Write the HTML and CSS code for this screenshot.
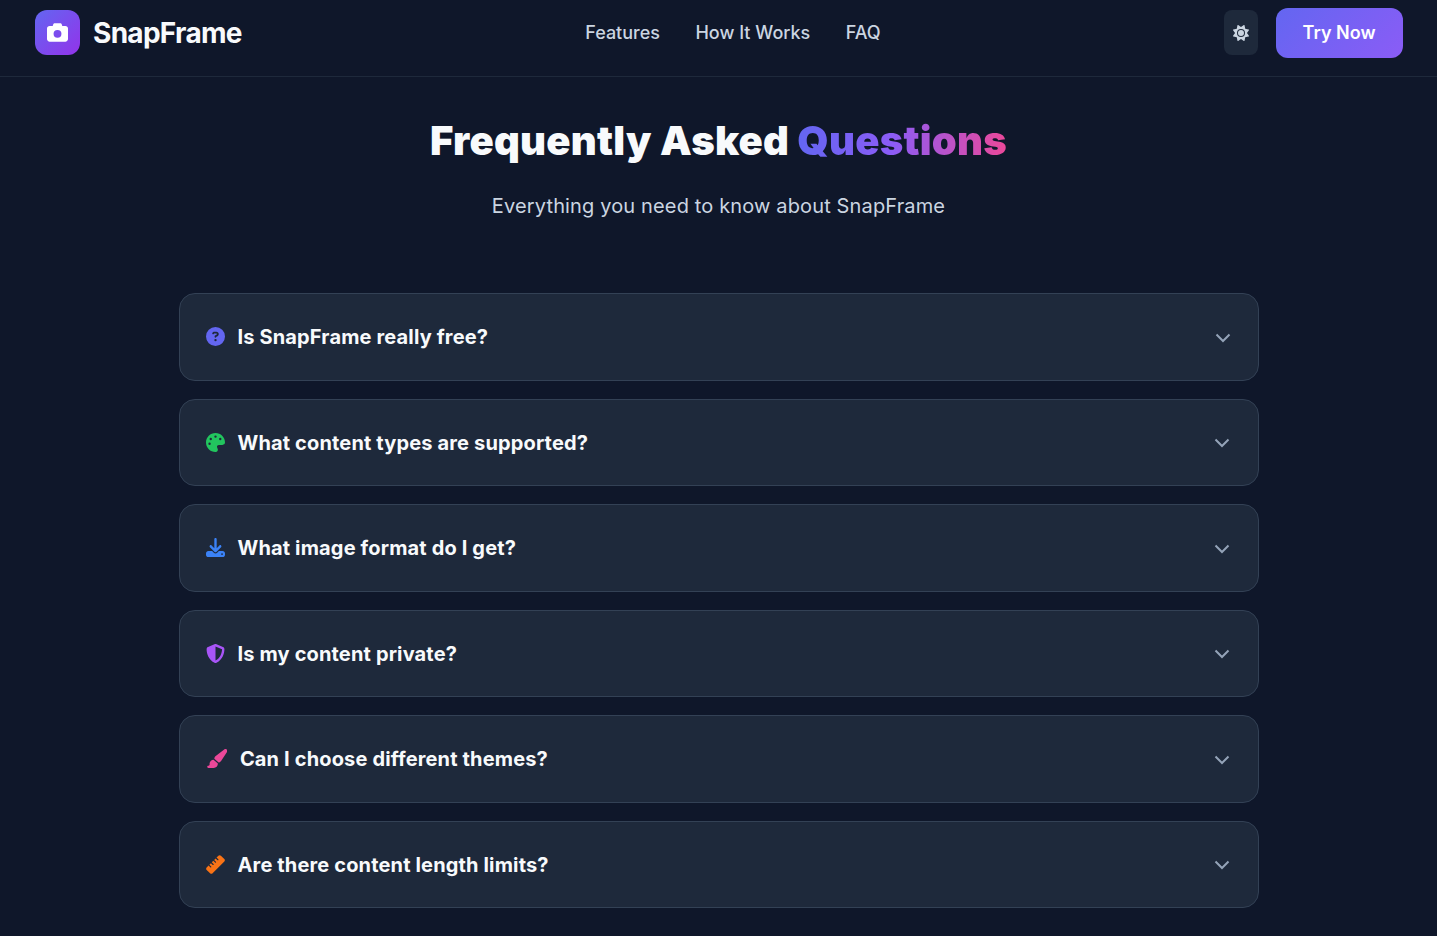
FILE: index.html
```html
<!DOCTYPE html>
<html>
  <head>
    <title>SnapFrame - FAQ</title>
    <meta charset="UTF-8" />
    <meta name="viewport" content="width=device-width, initial-scale=1.0" />
    <link rel="stylesheet" href="styles.css">
  </head>
  <body>
    <nav class="navbar">
      <a class="brand" href="#">
        <span class="brand-icon">
          <svg viewBox="0 0 512 512"><path d="M149.1 64.8L138.7 96H64C28.7 96 0 124.7 0 160V416c0 35.3 28.7 64 64 64H448c35.3 0 64-28.7 64-64V160c0-35.3-28.7-64-64-64H373.3L362.9 64.8C356.4 45.2 338.1 32 317.4 32H194.6c-20.7 0-39 13.2-45.5 32.8zM256 192a96 96 0 1 1 0 192 96 96 0 1 1 0-192z"/></svg>
        </span>
        <span class="brand-name">SnapFrame</span>
      </a>
      <div class="nav-links">
        <a href="#">Features</a>
        <a href="#">How It Works</a>
        <a href="#">FAQ</a>
      </div>
      <div class="nav-actions">
        <button class="theme-btn">
          <svg viewBox="0 0 512 512"><path d="M361.5 1.2c5 2.1 8.6 6.6 9.6 11.9L391 121l107.9 19.8c5.3 1 9.8 4.6 11.9 9.6s1.5 10.7-1.6 15.2L446.9 256l62.3 90.3c3.1 4.5 3.7 10.2 1.6 15.2s-6.6 8.6-11.9 9.6L391 391 371.1 498.9c-1 5.3-4.6 9.8-9.6 11.9s-10.7 1.5-15.2-1.6L256 446.9l-90.3 62.3c-4.5 3.1-10.2 3.7-15.2 1.6s-8.6-6.6-9.6-11.9L121 391 13.1 371.1c-5.3-1-9.8-4.6-11.9-9.6s-1.5-10.7 1.6-15.2L65.1 256 2.8 165.7c-3.1-4.5-3.7-10.2-1.6-15.2s6.6-8.6 11.9-9.6L121 121 140.9 13.1c1-5.3 4.6-9.8 9.6-11.9s10.7-1.5 15.2 1.6L256 65.1 346.3 2.8c4.5-3.1 10.2-3.7 15.2-1.6zM160 256a96 96 0 1 1 192 0 96 96 0 1 1 -192 0zm224 0a128 128 0 1 0 -256 0 128 128 0 1 0 256 0z"/></svg>
        </button>
        <a class="try-btn" href="#">Try Now</a>
      </div>
    </nav>

    <section class="faq">
      <h1>Frequently Asked <span class="gradient-text">Questions</span></h1>
      <p class="subtitle">Everything you need to know about SnapFrame</p>

      <div class="faq-list">
        <div class="faq-item">
          <h3>
            <svg class="faq-icon icon-indigo" viewBox="0 0 512 512"><path d="M256 512A256 256 0 1 0 256 0a256 256 0 1 0 0 512zM169.8 165.3c7.9-22.3 29.1-37.3 52.8-37.3h58.3c34.9 0 63.1 28.3 63.1 63.1c0 22.6-12.1 43.5-31.7 54.8L280 264.4c-.2 13-10.9 23.6-24 23.6c-13.3 0-24-10.7-24-24V250.5c0-8.6 4.6-16.5 12.1-20.8l44.3-25.4c4.7-2.7 7.6-7.7 7.6-13.1c0-8.4-6.8-15.1-15.1-15.1H222.6c-3.4 0-6.4 2.1-7.5 5.3l-.4 1.2c-4.4 12.5-18.2 19-30.6 14.6s-19-18.2-14.6-30.6l.4-1.2zM224 352a32 32 0 1 1 64 0 32 32 0 1 1 -64 0z"/></svg>
            Is SnapFrame really free?
          </h3>
          <svg class="chevron" viewBox="0 0 16 10"><polyline points="1.5,1.5 8,8 14.5,1.5"/></svg>
        </div>
        <div class="faq-item">
          <h3>
            <svg class="faq-icon icon-green" viewBox="0 0 512 512"><path d="M512 256c0 .9 0 1.8 0 2.7c-.4 36.5-33.6 61.3-70.1 61.3H344c-26.5 0-48 21.5-48 48c0 3.4 .4 6.7 1 9.9c2.1 10.2 6.5 20 10.8 29.9c6.1 13.8 12.1 27.5 12.1 42c0 31.8-21.6 60.7-53.4 62c-3.5 .1-7 .2-10.6 .2C114.6 512 0 397.4 0 256S114.6 0 256 0S512 114.6 512 256zM128 288a32 32 0 1 0 -64 0 32 32 0 1 0 64 0zm0-96a32 32 0 1 0 0-64 32 32 0 1 0 0 64zM288 96a32 32 0 1 0 -64 0 32 32 0 1 0 64 0zm96 96a32 32 0 1 0 0-64 32 32 0 1 0 0 64z"/></svg>
            What content types are supported?
          </h3>
          <svg class="chevron" viewBox="0 0 16 10"><polyline points="1.5,1.5 8,8 14.5,1.5"/></svg>
        </div>
        <div class="faq-item">
          <h3>
            <svg class="faq-icon icon-blue" viewBox="0 0 512 512"><path d="M288 32c0-17.7-14.3-32-32-32s-32 14.3-32 32V274.7l-73.4-73.4c-12.5-12.5-32.8-12.5-45.3 0s-12.5 32.8 0 45.3l128 128c12.5 12.5 32.8 12.5 45.3 0l128-128c12.5-12.5 12.5-32.8 0-45.3s-32.8-12.5-45.3 0L288 274.7V32zM64 352c-35.3 0-64 28.7-64 64v32c0 35.3 28.7 64 64 64H448c35.3 0 64-28.7 64-64V416c0-35.3-28.7-64-64-64H346.5l-45.3 45.3c-25 25-65.5 25-90.5 0L165.5 352H64zm368 56a24 24 0 1 1 0 48 24 24 0 1 1 0-48z"/></svg>
            What image format do I get?
          </h3>
          <svg class="chevron" viewBox="0 0 16 10"><polyline points="1.5,1.5 8,8 14.5,1.5"/></svg>
        </div>
        <div class="faq-item">
          <h3>
            <svg class="faq-icon icon-purple" viewBox="0 0 512 512"><path d="M256 0c4.6 0 9.2 1 13.4 2.9L457.7 82.8c22 9.3 38.4 31 38.3 57.2c-.5 99.2-41.3 280.7-213.6 363.2c-16.7 8-36.1 8-52.8 0C57.3 420.7 16.5 239.2 16 140c-.1-26.2 16.3-47.9 38.3-57.2L242.7 2.9C246.8 1 251.4 0 256 0zm0 66.8V444.8C394 378 431.1 230.1 432 141.4L256 66.8l0 0z"/></svg>
            Is my content private?
          </h3>
          <svg class="chevron" viewBox="0 0 16 10"><polyline points="1.5,1.5 8,8 14.5,1.5"/></svg>
        </div>
        <div class="faq-item">
          <h3>
            <svg class="faq-icon faq-icon-wide icon-pink" viewBox="0 0 576 512"><path d="M339.3 367.1c27.3-3.9 51.9-19.4 67.2-42.9L568.2 74.1c12.6-19.5 9.4-45.3-7.6-61.2S517.7-4.4 499.1 9.6L262.4 187.2c-24 18-38.2 46.1-38.4 76.1L339.3 367.1zm-19.6 25.4l-116-104.4C143.9 290.3 96 339.6 96 400c0 3.9 .2 7.8 .6 11.6C98.4 429.1 86.4 448 68.8 448H64c-17.7 0-32 14.3-32 32s14.3 32 32 32H208c61.9 0 112-50.1 112-112c0-2.5-.1-5-.2-7.5z"/></svg>
            Can I choose different themes?
          </h3>
          <svg class="chevron" viewBox="0 0 16 10"><polyline points="1.5,1.5 8,8 14.5,1.5"/></svg>
        </div>
        <div class="faq-item">
          <h3>
            <svg class="faq-icon icon-orange" viewBox="0 0 512 512"><path d="M177.9 494.1c-18.7 18.7-49.1 18.7-67.9 0L17.9 401.9c-18.7-18.7-18.7-49.1 0-67.9l50.7-50.7 48 48c6.2 6.2 16.4 6.2 22.6 0s6.2-16.4 0-22.6l-48-48 41.4-41.4 48 48c6.2 6.2 16.4 6.2 22.6 0s6.2-16.4 0-22.6l-48-48 41.4-41.4 48 48c6.2 6.2 16.4 6.2 22.6 0s6.2-16.4 0-22.6l-48-48 41.4-41.4 48 48c6.2 6.2 16.4 6.2 22.6 0s6.2-16.4 0-22.6l-48-48 50.7-50.7c18.7-18.7 49.1-18.7 67.9 0l92.1 92.1c18.7 18.7 18.7 49.1 0 67.9L177.9 494.1z"/></svg>
            Are there content length limits?
          </h3>
          <svg class="chevron" viewBox="0 0 16 10"><polyline points="1.5,1.5 8,8 14.5,1.5"/></svg>
        </div>
      </div>
    </section>
  </body>
</html>
```

FILE: styles.css
```css
* {
  box-sizing: border-box;
}
html, body {
  height: 100%;
  overflow: hidden;
}
body {
  margin: 0;
  font-family: "Inter", sans-serif;
  background-color: #0f172a;
  color: #f8fafc;
}
a {
  text-decoration: none;
  color: inherit;
}
.navbar {
  display: flex;
  align-items: center;
  justify-content: space-between;
  height: 77px;
  padding: 0 34px 11px 35px;
  border-bottom: 1px solid #1e293b;
}
.brand {
  display: flex;
  align-items: center;
  gap: 13px;
}
.brand-icon {
  display: flex;
  align-items: center;
  justify-content: center;
  width: 45px;
  height: 45px;
  border-radius: 12px;
  background: linear-gradient(135deg, #6366f1, #9333ea);
}
.brand-icon svg {
  width: 21px;
  height: 21px;
  fill: #fff;
}
.brand-name {
  font-size: 28px;
  font-weight: 700;
  letter-spacing: -0.7px;
}
.nav-links {
  display: flex;
  gap: 35.5px;
  font-size: 18px;
  font-weight: 500;
  color: #cbd5e1;
}
.nav-actions {
  display: flex;
  align-items: center;
  justify-content: flex-end;
  gap: 18px;
}
.theme-btn {
  display: flex;
  align-items: center;
  justify-content: center;
  width: 34px;
  height: 45px;
  padding: 0;
  border: none;
  border-radius: 8px;
  background-color: #1e293b;
}
.theme-btn svg {
  width: 16px;
  height: 16px;
  fill: #cbd5e1;
}
.try-btn {
  padding: 13px 27.5px 13px 26.5px;
  border-radius: 12px;
  font-size: 18px;
  font-weight: 600;
  line-height: 24px;
  color: #fff;
  background: linear-gradient(135deg, #6366f1, #8b5cf6);
}
.faq {
  width: 1080px;
  margin: 0 auto;
}
h1 {
  margin: 38px 0 0;
  font-size: 40px;
  line-height: 52px;
  font-weight: 900;
  letter-spacing: 0.25px;
  text-align: center;
}
.gradient-text {
  background: linear-gradient(90deg, #6366f1, #8b5cf6 45%, #ec4899);
  -webkit-background-clip: text;
  background-clip: text;
  color: transparent;
}
.subtitle {
  margin: 23px 0 0;
  font-size: 20px;
  line-height: 32px;
  letter-spacing: 0.14px;
  text-align: center;
  color: #cbd5e1;
}
.faq-list {
  display: flex;
  flex-direction: column;
  gap: 18px;
  margin-top: 71px;
}
.faq-item {
  display: flex;
  align-items: center;
  justify-content: space-between;
  height: 87.5px;
  padding: 0 28px 0 26px;
  background-color: #1e293b;
  border: 1px solid #334155;
  border-radius: 16px;
}
.faq-item:first-child {
  padding-right: 27px;
}
.faq-item h3 {
  display: flex;
  align-items: center;
  gap: 13px;
  margin: 0.6px 0 0;
  font-size: 20px;
  font-weight: 700;
  letter-spacing: 0.15px;
}
.faq-icon {
  width: 19px;
  height: 19px;
  margin-top: -1px;
  flex-shrink: 0;
}
.faq-icon-wide {
  width: 21.4px;
}
.icon-indigo { fill: #6366f1; }
.icon-green { fill: #22c55e; }
.icon-blue { fill: #3b82f6; }
.icon-purple { fill: #a855f7; }
.icon-pink { fill: #ec4899; }
.icon-orange { fill: #f97316; }
.chevron {
  width: 16px;
  height: 10px;
  margin-top: 1.6px;
  fill: none;
  stroke: #94a3b8;
  stroke-width: 2;
}
```
